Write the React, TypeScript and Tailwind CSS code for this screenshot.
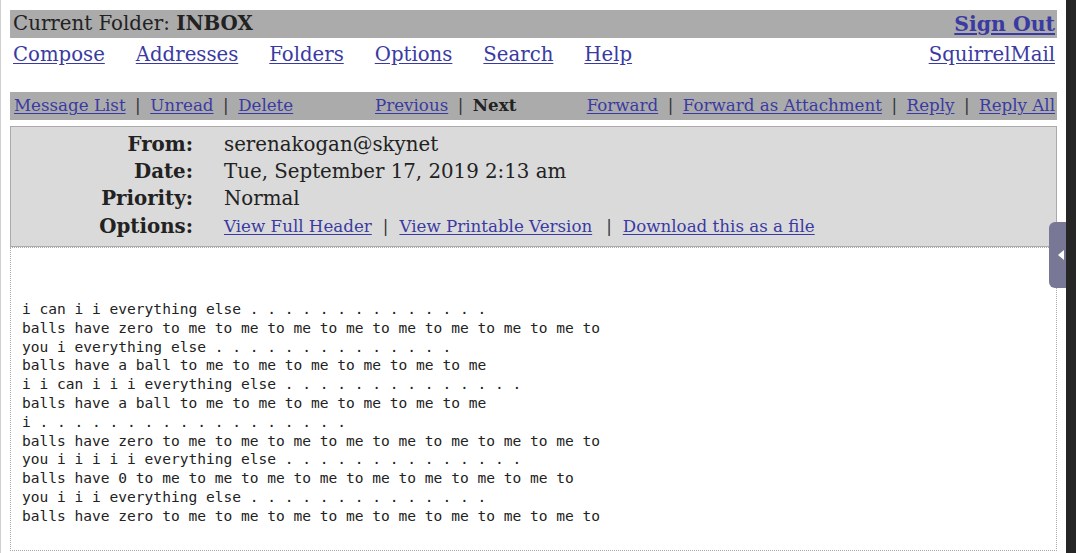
import React from "react";

const serif = { fontFamily: '"DejaVu Serif", "Liberation Serif", serif' };

const L = ({ children, className = "" }: { children: React.ReactNode; className?: string }) => (
  <a className={`text-[#3a3aa3] underline underline-offset-2 ${className}`}>{children}</a>
);

const Sep = ({ className = "mx-[9.5px]" }: { className?: string }) => (
  <span className={`text-[#333] ${className}`}>|</span>
);

const lines = [
  "i can i i everything else . . . . . . . . . . . . . .",
  "balls have zero to me to me to me to me to me to me to me to me to",
  "you i everything else . . . . . . . . . . . . . .",
  "balls have a ball to me to me to me to me to me to me",
  "i i can i i i everything else . . . . . . . . . . . . . .",
  "balls have a ball to me to me to me to me to me to me",
  "i . . . . . . . . . . . . . . . . . .",
  "balls have zero to me to me to me to me to me to me to me to me to",
  "you i i i i i everything else . . . . . . . . . . . . . .",
  "balls have 0 to me to me to me to me to me to me to me to me to",
  "you i i i everything else . . . . . . . . . . . . . .",
  "balls have zero to me to me to me to me to me to me to me to me to",
];

export default function App() {
  return (
    <div className="w-[1076px] h-[553px] flex bg-white overflow-hidden" style={serif}>
      <div className="relative w-[1066px] h-full border-l border-[#d0d0d0] pl-[9px] pr-[9px] pt-[10px]">
        {/* top bar */}
        <div className="h-[28px] bg-[#ababab] flex items-center justify-between pl-[3px] pr-[2px] text-[19.8px] text-[#222]">
          <span>
            Current Folder: <b>INBOX</b>
          </span>
          <L className="font-bold text-[20.4px]">Sign Out</L>
        </div>
        {/* nav row */}
        <div className="h-[33px] flex items-center justify-between pl-[3px] pr-[2px] text-[19.7px]">
          <div className="flex gap-[31px]">
            <L>Compose</L>
            <L>Addresses</L>
            <L>Folders</L>
            <L>Options</L>
            <L>Search</L>
            <L>Help</L>
          </div>
          <L>SquirrelMail</L>
        </div>
        <div className="h-[21px]" />
        {/* message nav bar */}
        <div className="h-[28px] bg-[#ababab] flex items-center pl-[4px] pr-[2px] text-[16.7px] text-[#222]">
          <div className="w-[361px] flex items-center">
            <L>Message List</L>
            <Sep />
            <L>Unread</L>
            <Sep />
            <L>Delete</L>
          </div>
          <div className="flex items-center">
            <L>Previous</L>
            <Sep />
            <span className="font-bold">Next</span>
          </div>
          <div className="ml-auto flex items-center">
            <L>Forward</L>
            <Sep />
            <L>Forward as Attachment</L>
            <Sep />
            <L>Reply</L>
            <Sep />
            <L>Reply All</L>
          </div>
        </div>
        {/* header box */}
        <div className="mt-[6px] h-[121px] bg-[#dadada] border border-[#aaaaaa] text-[#222] pt-[4px]">
          <div className="grid grid-cols-[182px_1fr] gap-x-[31px] text-[19.8px] leading-[27px]">
            <div className="text-right font-bold">From:</div>
            <div>serenakogan@skynet</div>
            <div className="text-right font-bold">Date:</div>
            <div>Tue, September 17, 2019 2:13 am</div>
            <div className="text-right font-bold">Priority:</div>
            <div>Normal</div>
            <div className="text-right font-bold leading-[29px]">Options:</div>
            <div className="text-[16.7px] leading-[29px] flex items-center">
              <L>View Full Header</L>
              <Sep className="mx-[11px]" />
              <L>View Printable Version</L>
              <span className="w-[3px]" />
              <Sep className="mx-[11px]" />
              <L>Download this as a file</L>
            </div>
          </div>
        </div>
        {/* body */}
        <div className="h-[304px] border border-dotted border-[#aaaaaa] bg-white pl-[11px] pt-[52px]">
          <pre
            className="text-[14.55px] leading-[18.8px] text-[#222]"
            style={{ fontFamily: '"DejaVu Sans Mono", "Liberation Mono", monospace' }}
          >
            {lines.join("\n")}
          </pre>
        </div>
        {/* side tab */}
        <div className="absolute right-0 top-[222px] w-[17px] h-[66px] rounded-l-[6px] bg-[#787896] flex items-center justify-end pr-[2px]">
          <div className="w-0 h-0 border-y-[5px] border-y-transparent border-r-[6px] border-r-white" />
        </div>
      </div>
      <div className="flex-1 bg-[#262626]" />
    </div>
  );
}
